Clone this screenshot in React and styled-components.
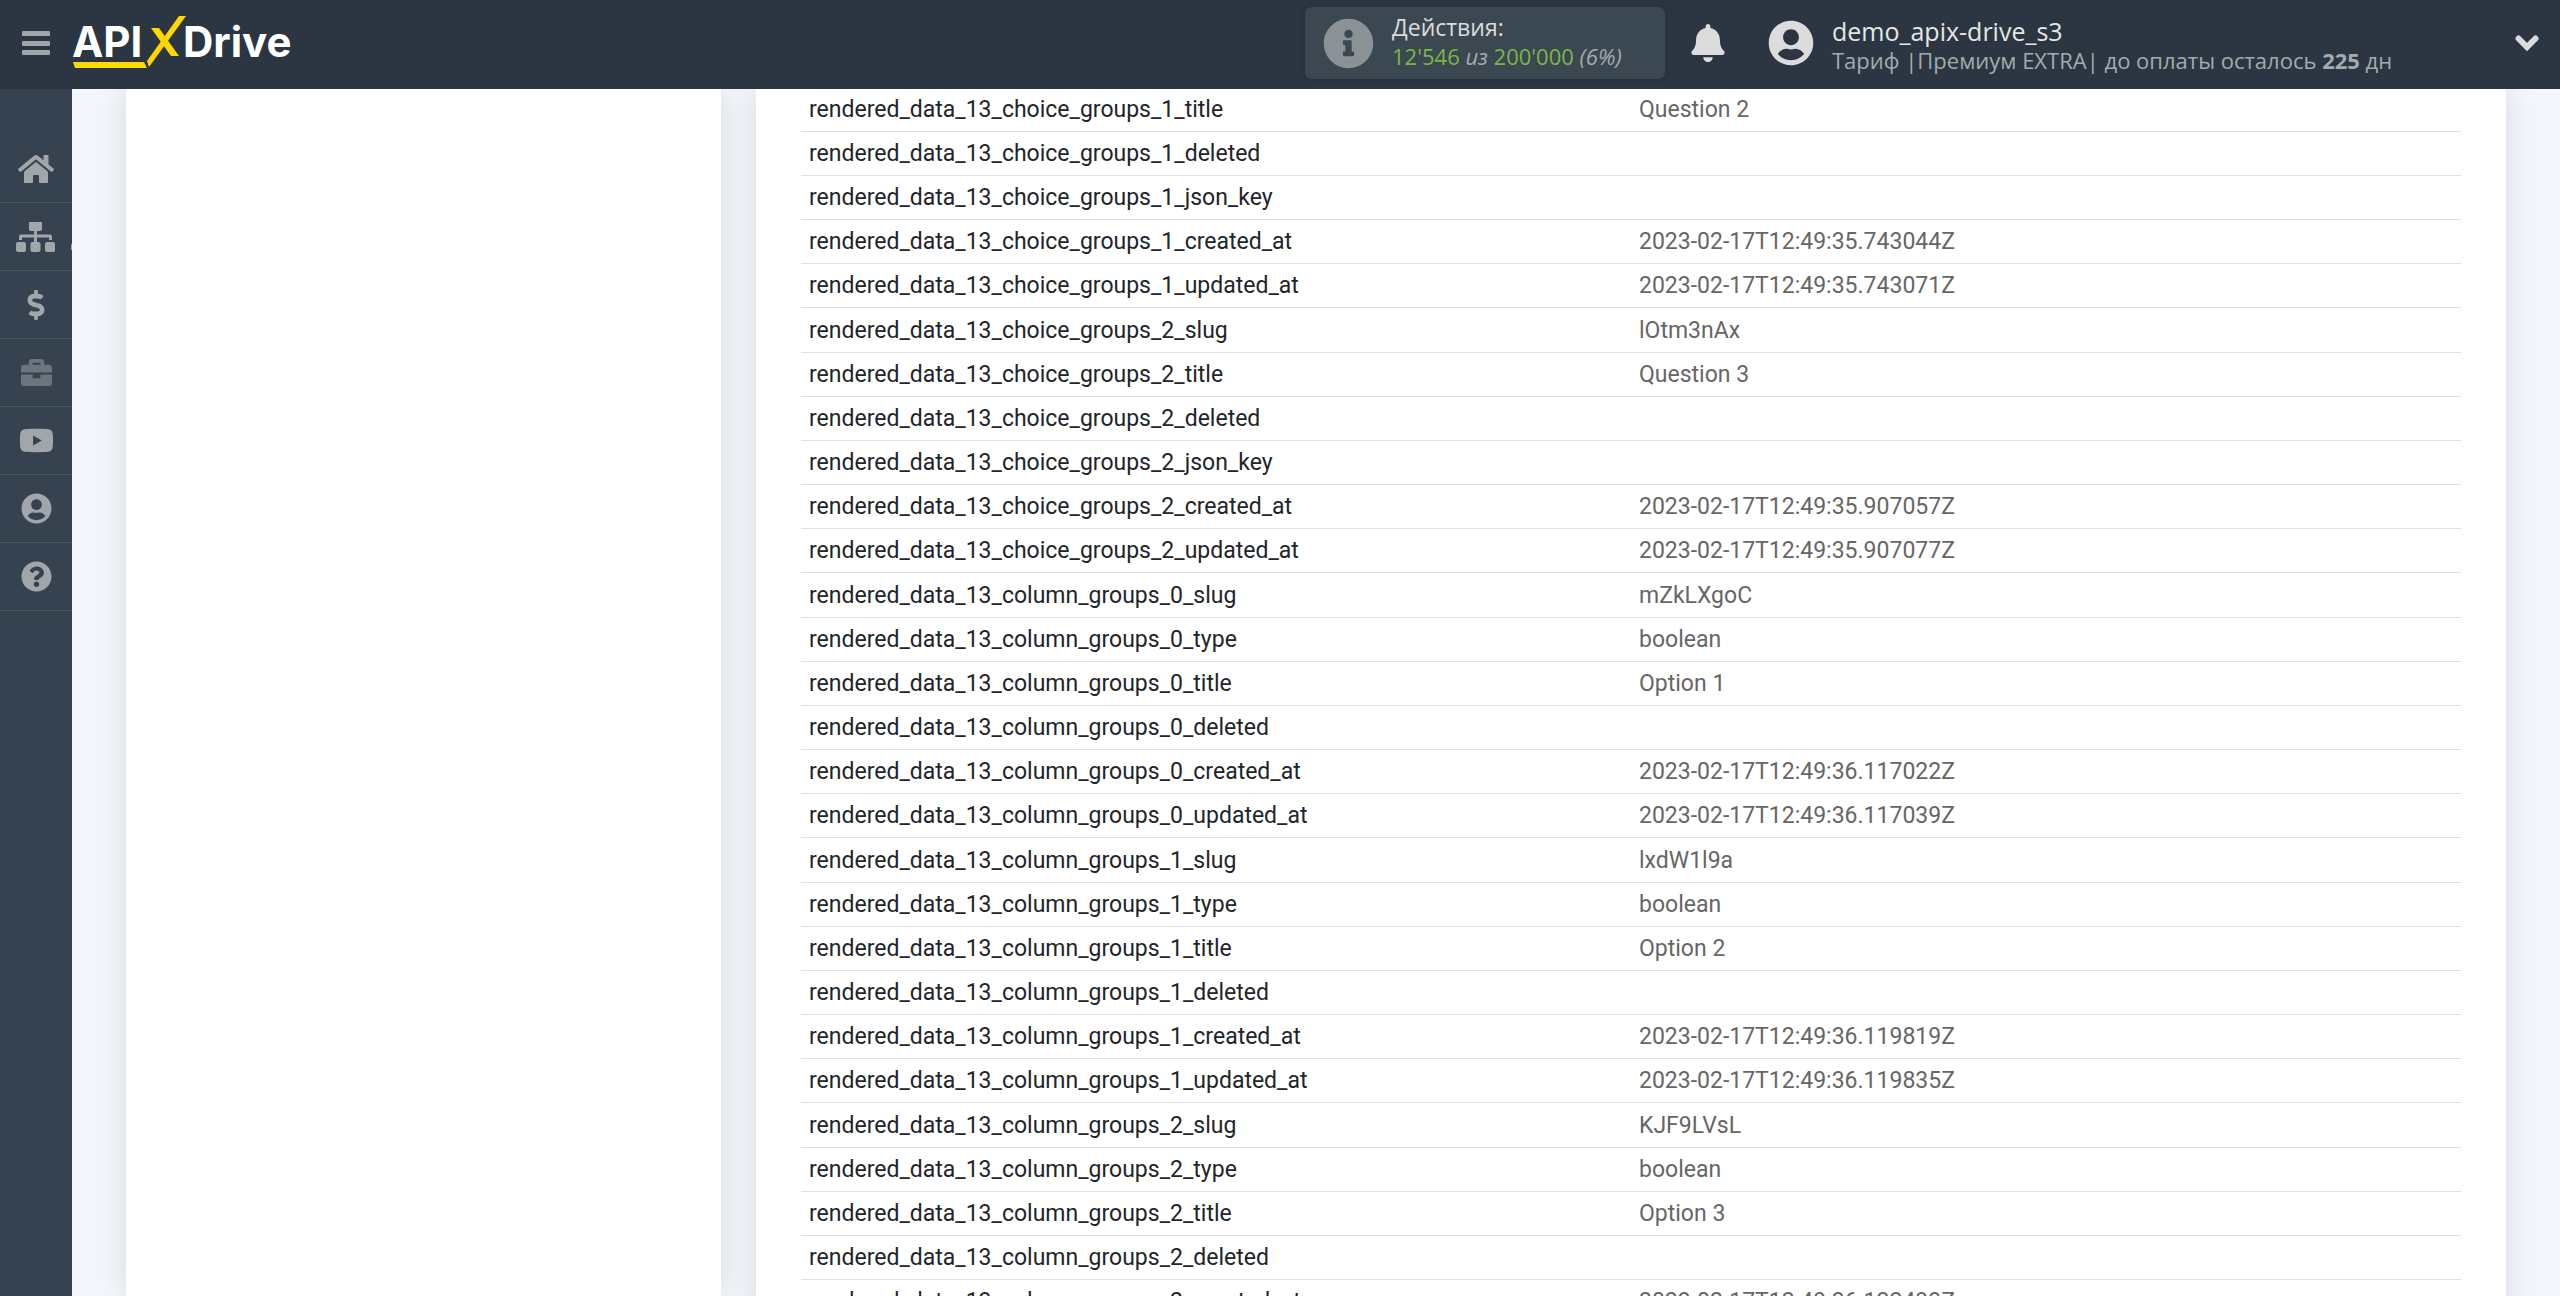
import React from "react";
import styled, { createGlobalStyle } from "styled-components";
import {
  FaBell, FaBriefcase, FaDollarSign, FaHome,
  FaInfoCircle, FaQuestionCircle, FaUserCircle, FaYoutube,
} from "react-icons/fa";

const Global = createGlobalStyle`
  *, *::before, *::after { box-sizing: border-box; }
  body { margin: 0; background: #f3f6fb; font-family: Roboto, "Noto Sans", sans-serif; }
  button { border: 0; padding: 0; background: none; cursor: pointer; }
  a { text-decoration: none; }
`;

const Page = styled.div`
  height: 100vh;
  display: flex;
  flex-direction: column;
  overflow: hidden;
`;

const Header = styled.header`
  flex: none;
  height: 89px;
  padding: 0 20px 3px;
  display: flex;
  align-items: center;
  background: #2b3642;
  color: #dcdcdc;
  font-family: "Open Sans", "Noto Sans", sans-serif;
  z-index: 1;
`;

const IconButton = styled.button`
  display: flex;
  align-items: center;
  justify-content: center;
  width: ${(p) => p.$width}px;
  height: 48px;
  color: ${(p) => p.$color || "#dcdcdc"};
`;

const LogoLink = styled.a`
  display: flex;
  margin-left: 20px;
  margin-right: auto;
`;

const LogoText = styled.text`
  font: 700 42px Inter, sans-serif;
  fill: #fff;
`;

const Lines = styled.div`
  display: flex;
  flex-direction: column;
`;

const Actions = styled.section`
  width: 360px;
  height: 72px;
  padding-left: 18px;
  display: flex;
  align-items: center;
  gap: 18px;
  border-radius: 7px;
  background: #3b4851;
  box-shadow: 0 0 6px rgba(0, 0, 0, 0.15);
  svg { color: #8b9296; }
  ${Lines} { padding-bottom: 4px; }
`;

const Title = styled.div`
  font-size: ${(p) => p.$size}px;
  line-height: 30px;
  color: ${(p) => p.$color};
`;

const Detail = styled.div`
  font-size: 22px;
  line-height: 28px;
  color: #a5aaae;
  white-space: nowrap;
`;

const Green = styled.span`
  color: #7ab648;
`;

const Account = styled.section`
  display: flex;
  align-items: center;
  gap: 18px;
  width: 746px;
  margin-left: 17px;
  ${Lines} { padding-top: 3px; }
`;

const Body = styled.div`
  flex: 1;
  min-height: 0;
  display: flex;
`;

const Sidebar = styled.nav`
  flex: none;
  width: 72px;
  padding-top: 46px;
  background: #36424f;
`;

const NavItem = styled.a`
  position: relative;
  height: 68px;
  display: flex;
  align-items: center;
  justify-content: center;
  border-bottom: 1px solid #4a5662;
  color: ${(p) => (p.$dim ? "#6c757e" : "#a1a6aa")};
  &::after {
    content: "";
    display: ${(p) => (p.$marked ? "block" : "none")};
    position: absolute;
    right: 0;
    bottom: 20px;
    width: 1px;
    height: 6px;
    background: #a1a6aa;
  }
`;

const Main = styled.main`
  flex: 1;
  min-width: 0;
  display: flex;
  gap: 35px;
  padding: 0 54px;
  overflow: hidden;
`;

const Card = styled.section`
  background: #fff;
  box-shadow: 0 0 30px rgba(0, 0, 0, 0.12);
`;

const SideCard = styled(Card)`
  flex: none;
  width: 25%;
`;

const DataCard = styled(Card)`
  flex: 1;
  height: max-content;
  padding: 0 45px;
`;

const Table = styled.table`
  width: 100%;
  table-layout: fixed;
  border-collapse: separate;
  border-spacing: 0;
  margin-top: -1px;
`;

const Cell = styled.td`
  height: 44px;
  padding: 0 8px;
  border-bottom: 1px solid #dee0e2;
  font-size: 23px;
  line-height: 43px;
  color: ${(p) => (p.$value ? "#666" : "#212529")};
`;

const Group = styled.tbody`
  tr:first-child > ${Cell} {
    height: ${(p) => (p.$spaced ? 45 : 44)}px;
  }
`;

const groups = [
  ["choice_groups_1", [["title", "Question 2"], ["deleted", ""], ["json_key", ""], ["created_at", "2023-02-17T12:49:35.743044Z"], ["updated_at", "2023-02-17T12:49:35.743071Z"]]],
  ["choice_groups_2", [["slug", "lOtm3nAx"], ["title", "Question 3"], ["deleted", ""], ["json_key", ""], ["created_at", "2023-02-17T12:49:35.907057Z"], ["updated_at", "2023-02-17T12:49:35.907077Z"]]],
  ["column_groups_0", [["slug", "mZkLXgoC"], ["type", "boolean"], ["title", "Option 1"], ["deleted", ""], ["created_at", "2023-02-17T12:49:36.117022Z"], ["updated_at", "2023-02-17T12:49:36.117039Z"]]],
  ["column_groups_1", [["slug", "lxdW1l9a"], ["type", "boolean"], ["title", "Option 2"], ["deleted", ""], ["created_at", "2023-02-17T12:49:36.119819Z"], ["updated_at", "2023-02-17T12:49:36.119835Z"]]],
  ["column_groups_2", [["slug", "KJF9LVsL"], ["type", "boolean"], ["title", "Option 3"], ["deleted", ""], ["created_at", "2023-02-17T12:49:36.122493Z"]]],
];

const MenuIcon = () => (
  <svg width="28" height="24" viewBox="0 0 28 24" fill="currentColor">
    <rect width="28" height="5" rx="1" />
    <rect y="10" width="28" height="5" rx="1" />
    <rect y="19" width="28" height="5" rx="1" />
  </svg>
);

const ChevronIcon = () => (
  <svg width="24" height="16" viewBox="0 0 24 16" fill="none" stroke="currentColor" strokeWidth="6" strokeLinecap="round">
    <path d="M3.500 3.500L12 12l8.500-8.500" />
  </svg>
);

const SitemapIcon = () => (
  <svg width="40" height="30" viewBox="0 0 40 30" fill="currentColor">
    <path d="M13 0h13v7a2 2 0 0 1-2 2h-3v3.500h13a2 2 0 0 1 2 2V18h-3v-2.500H21V20h-3v-4.500H6V18H3v-3.500a2 2 0 0 1 2-2h13V9h-3a2 2 0 0 1-2-2z" />
    <rect y="20" width="10" height="10" rx="2" />
    <rect x="14.500" y="20" width="10" height="10" rx="2" />
    <rect x="29" y="20" width="10" height="10" rx="2" />
  </svg>
);

const Logo = () => (
  <svg width="226" height="54" viewBox="0 0 226 54" role="img" aria-label="APIXDrive">
    <LogoText x="0" y="41">API</LogoText>
    <LogoText x="111" y="41">Drive</LogoText>
    <g fill="#ffd800">
      <path d="M1 46h71l3 6H3z" />
      <path d="M107 0h7L77 51l-2-6z" />
      <path d="M79 12h8l20 28h-8z" />
    </g>
  </svg>
);

const nav = [
  ["Главная", <FaHome size={36} />],
  ["Связи", <SitemapIcon />, { $marked: true }],
  ["Оплата", <FaDollarSign size={30} />],
  ["Проекты", <FaBriefcase size={31} />, { $dim: true }],
  ["Видео", <FaYoutube size={35} />],
  ["Профиль", <FaUserCircle size={31} />],
  ["Помощь", <FaQuestionCircle size={31} />],
];

export default function App() {
  return (
    <Page>
      <Global />
      <Header>
        <IconButton $width={32} $color="#a1a6aa" aria-label="Меню"><MenuIcon /></IconButton>
        <LogoLink href="#"><Logo /></LogoLink>
        <Actions>
          <FaInfoCircle size={51} />
          <Lines>
            <Title $size={23} $color="#dcdcdc">Действия:</Title>
            <Detail>
              <Green>12'546</Green> <i>из</i> <Green>200'000</Green> <i>(6%)</i>
            </Detail>
          </Lines>
        </Actions>
        <IconButton $width={86} aria-label="Уведомления"><FaBell size={38} /></IconButton>
        <Account>
          <FaUserCircle size={46} />
          <Lines>
            <Title $size={25} $color="#e6e6e6">demo_apix-drive_s3</Title>
            <Detail>Тариф |Премиум EXTRA| до оплаты осталось <b>225</b> дн</Detail>
          </Lines>
        </Account>
        <IconButton $width={26} aria-label="Аккаунт"><ChevronIcon /></IconButton>
      </Header>
      <Body>
        <Sidebar>
          {nav.map(([label, icon, props]) => (
            <NavItem key={label} href="#" aria-label={label} {...props}>{icon}</NavItem>
          ))}
        </Sidebar>
        <Main>
          <SideCard />
          <DataCard>
            <Table>
              {groups.map(([name, rows], i) => (
                <Group key={name} $spaced={i > 0}>
                  {rows.map(([field, value]) => (
                    <tr key={field}>
                      <Cell>{`rendered_data_13_${name}_${field}`}</Cell>
                      <Cell $value>{value}</Cell>
                    </tr>
                  ))}
                </Group>
              ))}
            </Table>
          </DataCard>
        </Main>
      </Body>
    </Page>
  );
}
